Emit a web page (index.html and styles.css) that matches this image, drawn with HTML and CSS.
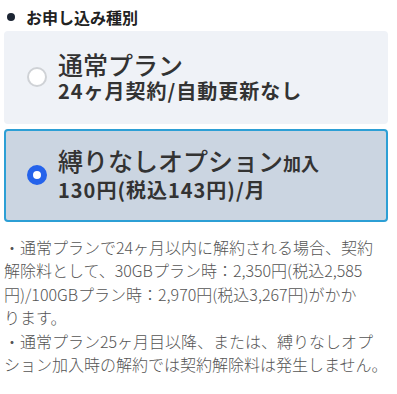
FILE: index.html
```html
<!DOCTYPE html>
<html>
	<head>
		<title>お申し込み種別</title>
		<link rel="stylesheet" href="styles.css">
	</head>
	<body>
		<div class="section">
			<div class="sectionTitle"><span class="bullet"></span>お申し込み種別</div>
			<div class="planList">
				<label class="plan">
					<span class="radio"></span>
					<span class="planText">
						<span class="planName">通常プラン</span>
						<span class="planPrice">24ヶ月契約/自動更新なし</span>
					</span>
				</label>
				<label class="plan selected">
					<span class="radio"></span>
					<span class="planText">
						<span class="planName">縛りなしオプション<small>加入</small></span>
						<span class="planPrice">130円(税込143円)/月</span>
					</span>
				</label>
			</div>
			<div class="notes">
				<p>・通常プランで24ヶ月以内に解約される場合、契約<br>解除料として、30GBプラン時：2,350円(税込2,585<br>円)/100GBプラン時：2,970円(税込3,267円)がかか<br>ります。</p>
				<p>・通常プラン25ヶ月目以降、または、縛りなしオプ<br>ション加入時の解約では契約解除料は発生しません。</p>
			</div>
		</div>
	</body>
</html>
```
FILE: styles.css
```css
body {
	margin: 0;
	background-color: #ffffff;
	font-family: "Noto Sans CJK JP", "Noto Sans", sans-serif;
	color: #333333;
}

.section {
	padding: 7px 9px 0 4px;
}

.sectionTitle {
	display: flex;
	align-items: center;
	gap: 11px;
	padding-left: 3px;
	font-size: 16px;
	font-weight: bold;
	line-height: 20px;
	color: #222222;
}

.bullet {
	width: 8px;
	height: 8px;
	border-radius: 50%;
	background-color: #1c2533;
}

.planList {
	display: flex;
	flex-direction: column;
	gap: 5px;
	margin-top: 4px;
}

.plan {
	display: flex;
	align-items: center;
	gap: 11px;
	height: 93px;
	box-sizing: border-box;
	padding: 0 0 2px 23px;
	border-radius: 4px;
	background-color: #eff2f7;
}

.plan.selected {
	padding-left: 21px;
	border: 2px solid #2c9fd5;
	background-color: #cbd5e1;
}

.radio {
	width: 20px;
	height: 20px;
	box-sizing: border-box;
	border-radius: 50%;
	border: 2px solid #cfd2d6;
	background-color: #ffffff;
}

.plan.selected .radio {
	border: 6px solid #2563eb;
}

.planText {
	display: flex;
	flex-direction: column;
}

.planName {
	font-size: 25px;
	line-height: 28px;
	font-weight: 500;
}

.planName small {
	font-size: 18px;
	font-weight: bold;
}

.planPrice {
	font-size: 20px;
	line-height: 26px;
	font-weight: bold;
	letter-spacing: 1px;
}

.notes {
	margin-top: 14px;
	font-size: 16px;
	line-height: 23.4px;
	font-weight: 300;
	white-space: nowrap;
	color: #555555;
}

.notes p {
	margin: 0;
}
```
